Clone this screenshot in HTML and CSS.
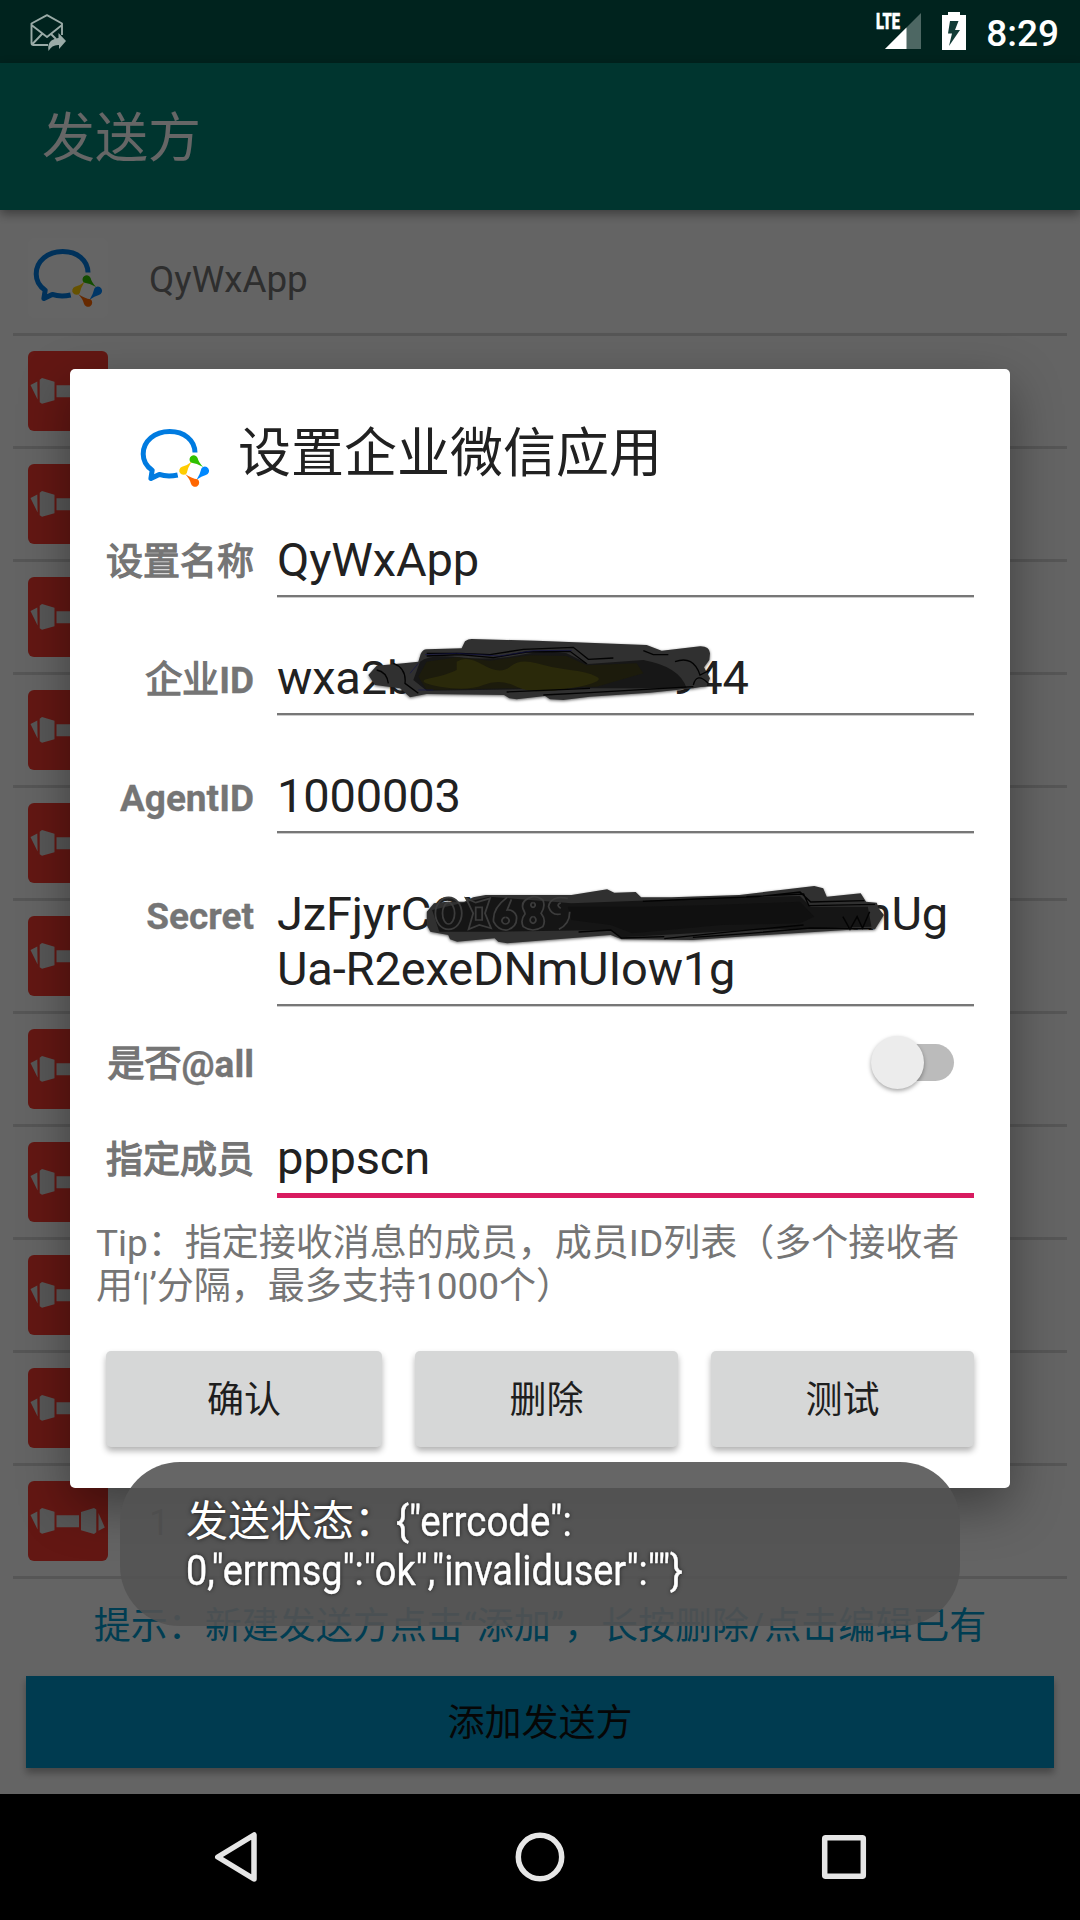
FILE: index.html
```html
<!DOCTYPE html>
<html lang="zh-CN">
<head>
<meta charset="utf-8">
<title>发送方</title>
<link rel="stylesheet" href="styles.css">
</head>
<body>
<svg class="defs" width="0" height="0" aria-hidden="true">
  <symbol id="wework" viewBox="-0.700 0 80 80">
    <path d="M59.300 34.500C59 22 48.500 13.500 34 13.500C19 13.500 7.500 23 7.500 36C7.500 43 11 48.500 16.500 52.200L15.200 60.500L23.500 56.400C29 58.300 36 58.300 42 57" fill="none" stroke="#007be0" stroke-width="5" stroke-linejoin="round"/>
    <path d="M55 44.500a4.200 4.200 0 1 1 6.900-4.500q.9 4.300 5.600 9q-6.500-3.800-12.500-4.500z" fill="#30c000"/>
    <path d="M65.700 50.500a4.200 4.200 0 1 1 4.500 6.400q-4.300.8-9.300 4.900q3.600-5.800 4.800-11.300z" fill="#0088ff"/>
    <path d="M61.900 61.300a4.200 4.200 0 1 1-6.700 4.200q-1-4.500-5.800-9.500q6.500 4.500 12.500 5.300z" fill="#ff6600"/>
    <path d="M51 55.300a4.200 4.200 0 1 1-4.700-6.600q4.700-.8 9.500-5q-3.700 6-4.800 11.600z" fill="#ffcc00"/>
  </symbol>
  <symbol id="bow" viewBox="0 0 80 80">
    <rect width="80" height="80" rx="6" fill="#f73a30"/>
    <path d="M2.500 34L9.300 30.500L9.600 48.500ZM11.700 28.700L14 27L26.500 30.700V49.300L14 52.800L11.700 51.300ZM28.500 34.300H51V46.300H28.500ZM53 31L66 27L68.300 28.500V51.300L66 53L53 49.300ZM70.500 32L76.800 46.500L70.500 49.800Z" fill="#d9d9d9"/>
  </symbol>
</svg>

<div class="phone">
  <div class="statusbar"></div>
  <header class="appbar">发送方</header>
  <main class="page">
    <ul class="list">
      <li class="item"><span class="tile"><svg class="logo"><use href="#wework"/></svg></span><span class="name">QyWxApp</span></li>
      <li class="item"><svg class="logo"><use href="#bow"/></svg></li>
      <li class="item"><svg class="logo"><use href="#bow"/></svg></li>
      <li class="item"><svg class="logo"><use href="#bow"/></svg></li>
      <li class="item"><svg class="logo"><use href="#bow"/></svg></li>
      <li class="item"><svg class="logo"><use href="#bow"/></svg></li>
      <li class="item"><svg class="logo"><use href="#bow"/></svg></li>
      <li class="item"><svg class="logo"><use href="#bow"/></svg></li>
      <li class="item"><svg class="logo"><use href="#bow"/></svg></li>
      <li class="item"><svg class="logo"><use href="#bow"/></svg></li>
      <li class="item"><svg class="logo"><use href="#bow"/></svg></li>
      <li class="item"><svg class="logo"><use href="#bow"/></svg><span class="name">1</span></li>
    </ul>
    <p class="hint">提示：新建发送方点击“添加”，长按删除/点击编辑已有</p>
    <button class="add">添加发送方</button>
  </main>
  <nav class="navbar">
    <svg width="60" height="60" viewBox="0 0 60 60"><path d="M48 8V52L11.800 30Z"/></svg>
    <svg width="60" height="60" viewBox="0 0 60 60"><circle cx="30" cy="30" r="21.700"/></svg>
    <svg width="60" height="60" viewBox="0 0 60 60"><rect x="10.700" y="10.700" width="38.600" height="38.600" rx="1"/></svg>
  </nav>

  <div class="scrim"></div>

  <div class="statusicons">
    <svg class="mail" width="38" height="40" viewBox="0 0 38 40">
      <g fill="none" stroke="#9aaba7" stroke-width="1.900" stroke-linejoin="round"><path d="M18 32H3.500Q1.500 32 1.500 30V10.500L17 2.200L32 10.500V22M1.500 12L17 24L32 12M2.500 31L12.500 20.500M21 21L26 26"/></g>
      <path d="M28.500 20L36 28L29 36V32Q22 31.500 18.500 38Q16.500 26.500 28.500 25Z" fill="#9aaba7"/>
    </svg>
    <svg class="lte" width="50" height="44" viewBox="0 0 50 44">
      <path d="M46 3V39H10Z" fill="#4d6763"/><path d="M31.500 17.500V39H10Z" fill="#fff"/>
      <text x="1" y="19" textLength="24" lengthAdjust="spacingAndGlyphs">LTE</text>
    </svg>
    <svg class="battery" width="24" height="38" viewBox="0 0 24 38"><path d="M6 0H18V3H24V38H0V3H6Z" fill="#fff"/><path d="M8 9H16.500L13 18H18L7 34L10 21.500H6Z" fill="#123b36"/></svg>
    <time>8:29</time>
  </div>

  <section class="dialog">
    <h2 class="dialog-title"><svg class="logo"><use href="#wework"/></svg><span>设置企业微信应用</span></h2>
    <div class="row"><label>设置名称</label><div class="field">QyWxApp</div></div>
    <div class="row"><label>企业<b>ID</b></label><div class="field">wxa2b<span class="tail-id">944</span>
      <svg class="mask mask-id" width="400" height="100" viewBox="0 0 1200 300">
        <path class="ink" d="M55 165L80 137L160 130L205 125L212 102Q218 88 230 88L335 85L345 64Q355 57 365 57L560 62L890 75L935 92L1050 79Q1078 78 1080 100L1078 120L1062 142L1080 175L1070 198L1030 205L900 218L720 230L640 240L600 238L585 228L500 238L478 235L462 225L230 222L180 232L150 205L75 195Z"/>
        <path d="M210 125Q240 102 330 112T510 105T650 100L715 132L880 120Q990 140 1010 205L730 205L230 212L190 180Z" fill="#171717"/>
        <path d="M230 125L320 112L420 122L540 106L650 108L710 136L860 130L880 160L740 200L230 210L205 170Z" fill="#1c1b0c"/>
        <path d="M320 125Q350 105 400 135T480 140T560 130T660 150T740 170T660 205T500 200T400 195T270 200T240 175T320 150Z" fill="#2a290a"/>
        <path class="contour" d="M230 100H330L420 104L520 88L670 82L715 118L790 114M230 108L330 104L430 113L530 96L660 94L710 131M470 216L720 205M580 225L720 218L1030 200M880 92L910 104H955M80 150Q110 155 115 190M130 130Q170 145 165 190L205 220M975 125Q1030 105 1050 165L1080 150M1030 195Q1040 155 1075 190"/>
        <path d="M225 104L320 100L450 108L550 92L665 91M205 210H250M180 160L205 130" fill="none" stroke="#14144c" stroke-width="2"/>
      </svg></div></div>
    <div class="row"><label><b>AgentID</b></label><div class="field">1000003</div></div>
    <div class="row row-secret"><label><b>Secret</b></label><div class="field">JzFjyrCOX689<span class="tail-secret">mUg</span><br>Ua-R2exeDNmUIow1g
      <svg class="mask mask-secret" width="560" height="140" viewBox="0 0 1568 420" preserveAspectRatio="none">
        <path class="ink" d="M75 125L95 100L130 95L180 95L205 82L240 75L480 75L580 58L600 68L660 66L675 82L760 82L950 75L1160 48L1185 55L1195 80L1290 70L1305 95L1335 98L1340 115L1355 135L1330 178L1250 180L980 198L820 210L620 208L590 195L300 220L275 215L265 205L160 215L140 208L135 195L85 185L75 165Z"/>
        <path d="M90 120L250 80L480 100L670 92L950 82L1120 78L1150 110L1310 110L1320 170L980 180L620 202L590 180L280 185L110 185Z" fill="#151515"/>
        <path d="M470 110H680L880 105L1120 95L1160 140L1120 160L900 165L650 190L590 165L480 150Z" fill="#101010"/>
        <g fill="none" stroke="#3c3c3c" stroke-width="5"><ellipse cx="136" cy="130" rx="37" ry="48"/><ellipse cx="136" cy="130" rx="17" ry="32"/><path d="M185 85L212 98L252 85L238 130L255 175L222 165L192 178L205 130ZM212 112H230V150H212ZM300 82Q258 115 262 155Q275 182 300 180Q330 170 326 138Q318 118 300 120L312 88M295 142A10 10 0 1 0 296 142M372 80Q338 90 344 115Q350 128 350 132Q336 150 345 170Q372 190 400 170Q410 150 395 130Q408 110 400 90Q385 78 372 80M372 98A6 7 0 1 0 373 98M372 140A8 10 0 1 0 373 140M470 85Q420 76 416 110Q425 138 450 132M450 98Q435 105 450 115M475 125Q476 160 445 178"/></g>
        <path class="contour" d="M500 186L590 180L620 204L740 200M680 94L830 87L1000 80L1120 66L1150 96L1300 92M970 80L1130 72L1145 107L1330 103M820 202L980 190L1150 174L1320 176M740 206L930 185L1130 165M1240 140L1260 178L1280 140L1295 175L1315 125"/>
      </svg></div></div>
    <div class="row row-switch"><label>是否<b>@all</b></label><span class="switch"></span></div>
    <div class="row row-member"><label>指定成员</label><div class="field focused">pppscn</div></div>
    <p class="tip">Tip：指定接收消息的成员，成员ID列表（多个接收者<br>用‘|’分隔，最多支持1000个）</p>
    <div class="actions"><button>确认</button><button>删除</button><button>测试</button></div>
  </section>

  <div class="toast">发送状态：<span class="narrow first">{"errcode":</span><br><span class="narrow">0,"errmsg":"ok","invaliduser":""}</span></div>
</div>
</body>
</html>
```
FILE: styles.css
```css
* { box-sizing: border-box; }
body { margin: 0; font-family: Roboto, "Noto Sans CJK SC", sans-serif; }
.defs { position: absolute; }
.phone {
  position: relative;
  display: flex;
  flex-direction: column;
  width: 1080px;
  height: 1920px;
  overflow: hidden;
  background: #fafafa;
  font-size: 37px;
}
.statusbar { height: 63px; background: #00574b; }
.appbar {
  display: flex;
  align-items: center;
  height: 147px;
  padding: 0 0 5px 42px;
  background: #008577;
  color: #fff;
  font-size: 53px;
  box-shadow: 0 4px 10px rgba(0, 0, 0, .4);
  z-index: 1;
}
.page { flex: 1; padding-top: 13px; }
.list { list-style: none; margin: 0 13px; padding: 0; }
.item {
  display: flex;
  align-items: center;
  gap: 41px;
  height: 113px;
  padding-left: 15px;
  border-bottom: 3px solid #d7d7d7;
  color: #737373;
}
.name { padding-top: 3px; font-size: 36.75px; }
.logo { display: block; width: 80px; height: 80px; flex: none; }
.tile { border-radius: 6px; background: #fcfcfc; }
.hint {
  margin: 21px 0 0;
  height: 54px;
  line-height: 54px;
  text-align: center;
  color: #09c;
  white-space: nowrap;
}
.add {
  display: block;
  width: 1028px;
  height: 92px;
  margin: 22px 26px 0;
  padding: 0 0 5px;
  border: 0;
  background: #0094c8;
  color: #111;
  font: inherit;
  box-shadow: 0 5px 7px rgba(0, 0, 0, .3);
}
.navbar {
  display: flex;
  justify-content: space-between;
  align-items: center;
  height: 126px;
  padding: 0 206px;
  background: #000;
}
.navbar svg { fill: none; stroke: #e6e6e6; stroke-width: 5.5; stroke-linejoin: round; }
.scrim { position: absolute; inset: 0 0 126px; background: rgba(0, 0, 0, .6); z-index: 2; }
.statusicons {
  position: absolute;
  inset: 0 0 auto;
  z-index: 3;
  display: flex;
  align-items: center;
  height: 63px;
  padding: 0 21px 0 30px;
  color: #fff;
}
.mail { margin-right: auto; margin-top: 3px; }
.lte { margin: 0 17px 0 0; font-weight: 900; font-size: 22px; }
.lte text { fill: #fff; stroke: #fff; stroke-width: .5; }
.battery { margin-right: 20px; margin-top: -1px; }
time { padding-top: 3px; font-weight: 500; }

.dialog {
  position: absolute;
  left: 70px;
  top: 369px;
  z-index: 4;
  width: 940px;
  height: 1119px;
  padding: 49px 36px 0 27px;
  border-radius: 5px;
  background: #fff;
  color: #212121;
  box-shadow: 0 18px 50px rgba(0, 0, 0, .38);
}
.dialog-title {
  display: flex;
  gap: 23px;
  height: 72px;
  margin: 0;
  padding-left: 38px;
  font-size: 53px;
  font-weight: 400;
  line-height: 73px;
}
.row { display: flex; height: 118px; }
.row label {
  width: 157px;
  margin-right: 23px;
  padding-top: 51px;
  text-align: right;
  line-height: 44px;
  color: #757575;
  -webkit-text-stroke: 1.3px #757575;
  white-space: nowrap;
}
.row label b { -webkit-text-stroke: .3px #757575; }
.field {
  position: relative;
  flex: 1;
  margin-bottom: 11px;
  padding-top: 42px;
  border-bottom: 2px solid #777;
  box-shadow: 0 1px #ccc;
  font-size: 47px;
  line-height: 55px;
  letter-spacing: -.15px;
  white-space: nowrap;
}
.row-secret { height: 173px; }
.row-switch { height: 92px; align-items: center; justify-content: space-between; }
.row-switch label { padding: 3px 0 0; }
.row-member { height: 99px; }
.row-member label { padding-top: 30px; }
.row-member .field { padding-top: 21px; margin-bottom: 10px; }
.row .focused { border-bottom: 5px solid #d81b60; box-shadow: none; }
.switch {
  position: relative;
  width: 70px;
  height: 37px;
  margin: -1px 20px 0 0;
  border-radius: 19px;
  background: #bbb;
}
.switch::before {
  content: "";
  position: absolute;
  left: -13px;
  top: -8px;
  width: 53px;
  height: 53px;
  border-radius: 50%;
  background: #ececec;
  box-shadow: 0 2px 4px rgba(0, 0, 0, .35);
}
.mask { position: absolute; overflow: visible; }
.mask-id { left: 73px; top: 12px; }
.mask-secret { left: 123px; top: 26px; }
.ink { fill: #303030; filter: drop-shadow(0 3px 5px rgba(0, 0, 0, .6)); }
.contour { fill: none; stroke: #030303; stroke-width: 4; }
.tail-id { position: absolute; left: 393px; }
.tail-secret { position: absolute; right: 26px; }
.tip { margin: 14px 0 0 -1px; line-height: 43px; white-space: nowrap; color: #757575; }
.actions { display: grid; grid-template-columns: 276px 263px 263px; gap: 33px; margin: 43px 0 0 9px; }
.actions button {
  height: 96px;
  padding: 0 0 4px;
  border: 0;
  border-radius: 5px;
  background: #d6d7d7;
  color: #1e1e1e;
  font: inherit;
  box-shadow: 0 4px 6px rgba(0, 0, 0, .3);
}
.toast {
  position: absolute;
  left: 120px;
  top: 1462px;
  z-index: 5;
  width: 840px;
  height: 164px;
  padding: 35px 66px;
  border-radius: 60px;
  background: rgba(83, 83, 83, .89);
  color: #fff;
  font-size: 42px;
  line-height: 49px;
  white-space: nowrap;
  text-shadow: 0 0 5px rgba(0, 0, 0, .7);
}
.narrow { display: inline-block; transform: scaleX(.902); transform-origin: left; -webkit-text-stroke: .4px #fff; }
.narrow.first { transform: scaleX(.915); }
```
